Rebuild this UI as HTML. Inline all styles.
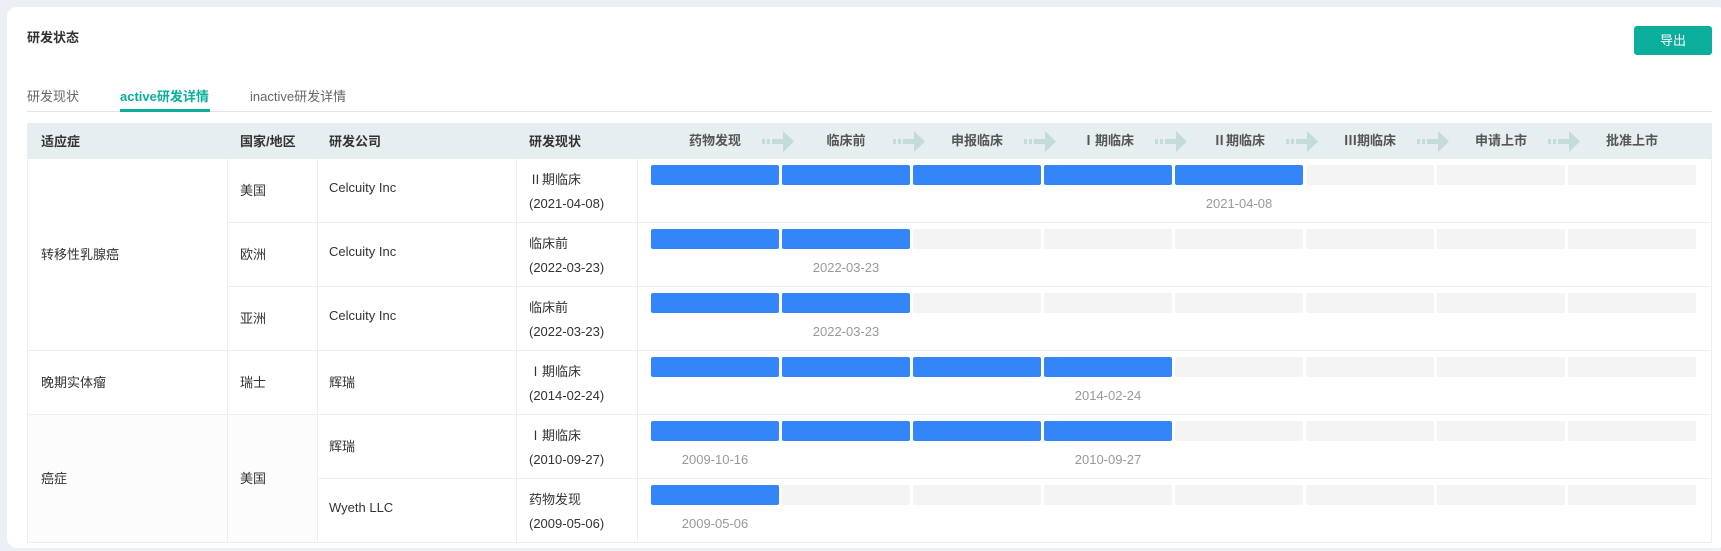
<!DOCTYPE html>
<html><head><meta charset="utf-8"><style>
*{margin:0;padding:0;box-sizing:border-box}
body{width:1721px;height:551px;background:#ebf0f7;font-family:"Liberation Sans","Noto Sans CJK SC",sans-serif;position:relative;overflow:hidden;color:#333;font-size:13px}
.card{position:absolute;left:7px;top:7px;width:1720px;height:541px;background:#fff;border-radius:10px}
.a{position:absolute;white-space:nowrap}
.bar{position:absolute;height:20px;width:128px;border-radius:2px;background:#f4f4f4}
.b{background:#3485f7}
.d{position:absolute;color:#999;font-size:13px;width:128px;text-align:center}
.hl{position:absolute;height:1px;background:#ebeef5}
.vl{position:absolute;width:1px;background:#ebeef5}
.st{position:absolute;top:123px;height:36px;line-height:36px;width:128px;text-align:center;font-weight:bold;color:#555}
</style></head><body>
<div class="card"></div>
<div class="a" style="left:27px;top:27px;font-weight:bold;font-size:13px">研发状态</div>
<div class="a" style="left:1634px;top:26px;width:78px;height:29px;background:#0aae9b;border-radius:3px;color:#fff;text-align:center;line-height:29px;font-size:13px">导出</div>
<div class="a" style="left:27px;top:86px;color:#666;font-size:13px">研发现状</div>
<div class="a" style="left:120px;top:86px;color:#0aae9b;font-weight:bold;font-size:13px">active研发详情</div>
<div class="a" style="left:250px;top:86px;color:#666;font-size:13px">inactive研发详情</div>
<div class="hl" style="left:27px;top:111px;width:1685px;background:#e4e4e4"></div>
<div class="a" style="left:120px;top:109px;width:90px;height:3px;background:#0aae9b"></div>
<div class="a" style="left:27px;top:123px;width:1685px;height:36px;background:#e6eef0"></div>
<div class="a" style="left:41px;top:131px;font-weight:bold">适应症</div>
<div class="a" style="left:240px;top:131px;font-weight:bold">国家/地区</div>
<div class="a" style="left:329px;top:131px;font-weight:bold">研发公司</div>
<div class="a" style="left:529px;top:131px;font-weight:bold">研发现状</div>
<div class="st" style="left:651px">药物发现</div>
<div class="st" style="left:782px">临床前</div>
<div class="st" style="left:913px">申报临床</div>
<div class="st" style="left:1044px">Ⅰ期临床</div>
<div class="st" style="left:1175px">Ⅱ期临床</div>
<div class="st" style="left:1306px">Ⅲ期临床</div>
<div class="st" style="left:1437px">申请上市</div>
<div class="st" style="left:1568px">批准上市</div>
<svg style="left:0;top:0;position:absolute" width="1721" height="200">
<g fill="#c3dcd8">
<g id="A"><rect x="762" y="139" width="3" height="5"/><rect x="767" y="139" width="3" height="5"/><rect x="772" y="139" width="12" height="5"/><polygon points="783,131 794,141.5 783,152"/></g>
<use href="#A" x="131"/><use href="#A" x="262"/><use href="#A" x="393"/><use href="#A" x="524"/><use href="#A" x="655"/><use href="#A" x="786"/>
</g></svg>
<div class="a" style="left:28px;top:414px;width:289px;height:128px;background:#fcfcfc"></div>
<div class="hl" style="left:27px;top:542px;width:1685px"></div>
<div class="hl" style="left:227px;top:222px;width:1485px"></div>
<div class="hl" style="left:227px;top:286px;width:1485px"></div>
<div class="hl" style="left:27px;top:350px;width:1685px"></div>
<div class="hl" style="left:27px;top:414px;width:1685px"></div>
<div class="hl" style="left:317px;top:478px;width:1395px"></div>
<div class="vl" style="left:27px;top:159px;height:384px"></div>
<div class="vl" style="left:227px;top:159px;height:384px"></div>
<div class="vl" style="left:317px;top:159px;height:384px"></div>
<div class="vl" style="left:516px;top:159px;height:384px"></div>
<div class="vl" style="left:637px;top:159px;height:384px"></div>
<div class="vl" style="left:1711px;top:159px;height:384px"></div>
<div class="a" style="left:41px;top:244px">转移性乳腺癌</div>
<div class="a" style="left:41px;top:372px">晚期实体瘤</div>
<div class="a" style="left:41px;top:468px">癌症</div>
<div class="a" style="left:240px;top:180px">美国</div>
<div class="a" style="left:240px;top:244px">欧洲</div>
<div class="a" style="left:240px;top:308px">亚洲</div>
<div class="a" style="left:240px;top:372px">瑞士</div>
<div class="a" style="left:240px;top:468px">美国</div>
<div class="a" style="left:329px;top:180px">Celcuity Inc</div>
<div class="a" style="left:329px;top:244px">Celcuity Inc</div>
<div class="a" style="left:329px;top:308px">Celcuity Inc</div>
<div class="a" style="left:329px;top:372px">辉瑞</div>
<div class="a" style="left:329px;top:436px">辉瑞</div>
<div class="a" style="left:329px;top:500px">Wyeth LLC</div>
<div class="a" style="left:529px;top:168px;line-height:24px">Ⅱ期临床<br>(2021-04-08)</div>
<div class="a" style="left:529px;top:232px;line-height:24px">临床前<br>(2022-03-23)</div>
<div class="a" style="left:529px;top:296px;line-height:24px">临床前<br>(2022-03-23)</div>
<div class="a" style="left:529px;top:360px;line-height:24px">Ⅰ期临床<br>(2014-02-24)</div>
<div class="a" style="left:529px;top:424px;line-height:24px">Ⅰ期临床<br>(2010-09-27)</div>
<div class="a" style="left:529px;top:488px;line-height:24px">药物发现<br>(2009-05-06)</div>
<div style="position:absolute;left:0;top:165px">
<div class="bar b" style="left:651px"></div><div class="bar b" style="left:782px"></div><div class="bar b" style="left:913px"></div><div class="bar b" style="left:1044px"></div><div class="bar b" style="left:1175px"></div><div class="bar" style="left:1306px"></div><div class="bar" style="left:1437px"></div><div class="bar" style="left:1568px"></div>
<div class="d" style="left:1175px;top:31px">2021-04-08</div></div>
<div style="position:absolute;left:0;top:229px">
<div class="bar b" style="left:651px"></div><div class="bar b" style="left:782px"></div><div class="bar" style="left:913px"></div><div class="bar" style="left:1044px"></div><div class="bar" style="left:1175px"></div><div class="bar" style="left:1306px"></div><div class="bar" style="left:1437px"></div><div class="bar" style="left:1568px"></div>
<div class="d" style="left:782px;top:31px">2022-03-23</div></div>
<div style="position:absolute;left:0;top:293px">
<div class="bar b" style="left:651px"></div><div class="bar b" style="left:782px"></div><div class="bar" style="left:913px"></div><div class="bar" style="left:1044px"></div><div class="bar" style="left:1175px"></div><div class="bar" style="left:1306px"></div><div class="bar" style="left:1437px"></div><div class="bar" style="left:1568px"></div>
<div class="d" style="left:782px;top:31px">2022-03-23</div></div>
<div style="position:absolute;left:0;top:357px">
<div class="bar b" style="left:651px"></div><div class="bar b" style="left:782px"></div><div class="bar b" style="left:913px"></div><div class="bar b" style="left:1044px"></div><div class="bar" style="left:1175px"></div><div class="bar" style="left:1306px"></div><div class="bar" style="left:1437px"></div><div class="bar" style="left:1568px"></div>
<div class="d" style="left:1044px;top:31px">2014-02-24</div></div>
<div style="position:absolute;left:0;top:421px">
<div class="bar b" style="left:651px"></div><div class="bar b" style="left:782px"></div><div class="bar b" style="left:913px"></div><div class="bar b" style="left:1044px"></div><div class="bar" style="left:1175px"></div><div class="bar" style="left:1306px"></div><div class="bar" style="left:1437px"></div><div class="bar" style="left:1568px"></div>
<div class="d" style="left:651px;top:31px">2009-10-16</div><div class="d" style="left:1044px;top:31px">2010-09-27</div></div>
<div style="position:absolute;left:0;top:485px">
<div class="bar b" style="left:651px"></div><div class="bar" style="left:782px"></div><div class="bar" style="left:913px"></div><div class="bar" style="left:1044px"></div><div class="bar" style="left:1175px"></div><div class="bar" style="left:1306px"></div><div class="bar" style="left:1437px"></div><div class="bar" style="left:1568px"></div>
<div class="d" style="left:651px;top:31px">2009-05-06</div></div>
</body></html>
